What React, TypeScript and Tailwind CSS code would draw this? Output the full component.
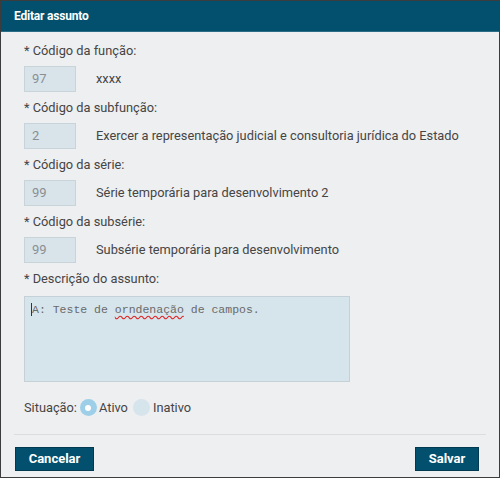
import React from "react";

const rows = [
  { label: "* Código da função:", code: "97", desc: "xxxx" },
  {
    label: "* Código da subfunção:",
    code: "2",
    desc: "Exercer a representação judicial e consultoria jurídica do Estado",
  },
  { label: "* Código da série:", code: "99", desc: "Série temporária para desenvolvimento 2" },
  { label: "* Código da subsérie:", code: "99", desc: "Subsérie temporária para desenvolvimento" },
];

export default function App() {
  return (
    <div
      className="w-[501px] h-[479px] bg-white"
      style={{ fontFamily: "Roboto, 'Liberation Sans', sans-serif" }}
    >
      <div className="w-[500px] h-[478px] border border-[#3c3c3c] bg-[#eeeff1] flex flex-col">
        <div className="h-[31px] bg-[#02506d] border-b border-[#2c6d86] flex items-center px-[13px]">
          <span className="text-white font-bold text-[12px] tracking-[-0.2px]">Editar assunto</span>
        </div>

        <div className="flex flex-col pl-[23px] pt-[10px]">
          {rows.map((r, i) => (
            <div key={i} className="flex flex-col">
              <div className="text-[12.8px] text-[#454545] h-[17px] leading-[17px]">{r.label}</div>
              <div className="flex items-center mt-[7px] mb-[7px]">
                <div className="w-[52px] h-[26px] bg-[#d8e4ea] border border-[#c9d4da] text-[13px] text-[#8a8f93] flex items-center pl-[7px]">
                  {r.code}
                </div>
                <span className="ml-[20px] text-[12.8px] text-[#454545]">{r.desc}</span>
              </div>
            </div>
          ))}

          <div className="text-[12.8px] text-[#454545] h-[17px] leading-[17px]">* Descrição do assunto:</div>
          <div className="mt-[9px] w-[326px] h-[86px] bg-[#d6e4eb] border border-[#c6d1d7] px-[6px] pt-[4px] text-[11.5px] leading-[16px]">
            <span
              className="text-[#6a6a6a]"
              style={{ fontFamily: "'Liberation Mono', 'DejaVu Sans Mono', monospace" }}
            >
              <span className="border-l border-[#333]">A</span>: Teste de{" "}
              <span className="underline decoration-wavy decoration-[#d22] underline-offset-2">orndenação</span> de campos.
            </span>
          </div>

          <div className="flex items-center mt-[16px] text-[12.8px] text-[#454545]">
            <span>Situação:</span>
            <span className="ml-[3px] w-[17px] h-[17px] rounded-full bg-[#9dcfe8] flex items-center justify-center">
              <span className="w-[6px] h-[6px] rounded-full bg-white" />
            </span>
            <span className="ml-[2px]">Ativo</span>
            <span className="ml-[5px] w-[17px] h-[17px] rounded-full bg-[#d6e4ec]" />
            <span className="ml-[3px]">Inativo</span>
          </div>
        </div>

        <div className="mx-[13px] mt-[17px] h-px bg-[#dcdddf]" />

        <div className="flex justify-between pl-[14px] pr-[20px] mt-[12px]">
          <button className="w-[79px] h-[24px] bg-[#02506d] text-white font-bold text-[13px] border border-[#013a50]">
            Cancelar
          </button>
          <button className="w-[64px] h-[24px] bg-[#02506d] text-white font-bold text-[13px] border border-[#013a50]">
            Salvar
          </button>
        </div>
      </div>
    </div>
  );
}
